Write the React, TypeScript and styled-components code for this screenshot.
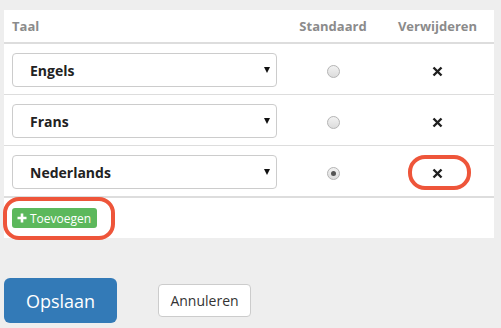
import * as React from "react";
import styled, { createGlobalStyle } from "styled-components";

const GlobalStyle = createGlobalStyle`
  body {
    margin: 0;
    background: #eeeeee;
    font-family: "Open Sans", "Liberation Sans", sans-serif;
  }
`;

const Page = styled.div`
  padding: 10px 7px 0 4px;
`;

const Panel = styled.div`
  position: relative;
  background: #ffffff;
  width: 490px;
`;

const Table = styled.table`
  width: 100%;
  border-collapse: collapse;
`;

const HeadCell = styled.th<{ $center?: boolean; $width?: number }>`
  height: 33px;
  padding: 0 8px;
  box-sizing: border-box;
  font-size: 13px;
  font-weight: 700;
  color: #8b8b8b;
  text-align: ${(p) => (p.$center ? "center" : "left")};
  width: ${(p) => (p.$width ? `${p.$width}px` : "auto")};
  border-bottom: 2px solid #dddddd;
`;

const Row = styled.tr<{ $last?: boolean }>`
  border-bottom: ${(p) => (p.$last ? "2px" : "1px")} solid #dddddd;
`;

const Cell = styled.td<{ $center?: boolean }>`
  padding: 9px 8px 7px;
  height: 34px;
  text-align: ${(p) => (p.$center ? "center" : "left")};
  vertical-align: middle;
`;

const SelectBox = styled.div`
  position: relative;
  height: 34px;
  box-sizing: border-box;
  border: 1px solid #cccccc;
  border-radius: 4px;
  display: flex;
  align-items: center;
  padding-left: 17px;
  font-size: 14px;
  font-weight: 700;
  color: #222222;
`;

const Caret = styled.span`
  position: absolute;
  right: 6px;
  top: 50%;
  transform: translateY(-50%);
  width: 0;
  height: 0;
  border-left: 3px solid transparent;
  border-right: 3px solid transparent;
  border-top: 6px solid #111111;
`;

const Radio = styled.span<{ $checked?: boolean }>`
  display: inline-block;
  position: relative;
  width: 11px;
  height: 11px;
  border-radius: 50%;
  border: 1px solid #b5b5b5;
  background: linear-gradient(#f2f2f2, #dcdcdc);
  vertical-align: middle;

  &::after {
    content: "";
    display: ${(p) => (p.$checked ? "block" : "none")};
    position: absolute;
    left: 3px;
    top: 3px;
    width: 5px;
    height: 5px;
    border-radius: 50%;
    background: #555555;
  }
`;

const RemoveIcon = styled.svg`
  display: inline-block;
  vertical-align: middle;
`;

const Footer = styled.div`
  padding: 8px 8px 10px;
`;

const AddButton = styled.button`
  display: inline-flex;
  align-items: center;
  gap: 3px;
  height: 20px;
  padding: 0 6px 0 5px;
  border: none;
  border-radius: 3px;
  background: #5cb85c;
  color: #ffffff;
  font-family: inherit;
  font-size: 12px;
`;

const Highlight = styled.div<{ $left: number; $top: number; $w: number; $h: number; $r: number }>`
  position: absolute;
  left: ${(p) => p.$left}px;
  top: ${(p) => p.$top}px;
  width: ${(p) => p.$w}px;
  height: ${(p) => p.$h}px;
  box-sizing: border-box;
  border: 4px solid #ee553a;
  border-radius: ${(p) => p.$r}px;
  pointer-events: none;
`;

const Actions = styled.div`
  display: flex;
  align-items: center;
  gap: 41px;
  margin-top: 40px;
`;

const PrimaryButton = styled.button`
  width: 113px;
  height: 45px;
  border: none;
  border-radius: 6px;
  background: #337ab7;
  color: #ffffff;
  font-family: inherit;
  font-size: 18px;
`;

const DefaultButton = styled.button`
  width: 93px;
  height: 33px;
  border: 1px solid #cccccc;
  border-radius: 4px;
  background: #ffffff;
  color: #333333;
  font-family: inherit;
  font-size: 14px;
`;

const languages = [
  { name: "Engels", standard: false },
  { name: "Frans", standard: false },
  { name: "Nederlands", standard: true },
];

const Cross = () => (
  <RemoveIcon width="11" height="11" viewBox="0 0 11 11">
    <path d="M1.5 1.5 L9.5 9.5 M9.5 1.5 L1.5 9.5" stroke="#1f1f1f" strokeWidth="2.4" />
  </RemoveIcon>
);

const Plus = () => (
  <svg width="10" height="10" viewBox="0 0 10 10">
    <path d="M5 0.5 V9.5 M0.5 5 H9.5" stroke="#ffffff" strokeWidth="2.6" />
  </svg>
);

export default function App() {
  return (
    <Page>
      <GlobalStyle />
      <Panel>
        <Table>
          <thead>
            <tr>
              <HeadCell>Taal</HeadCell>
              <HeadCell $center $width={96}>Standaard</HeadCell>
              <HeadCell $center $width={113}>Verwijderen</HeadCell>
            </tr>
          </thead>
          <tbody>
            {languages.map((lang, i) => (
              <Row key={lang.name} $last={i === languages.length - 1}>
                <Cell>
                  <SelectBox>
                    {lang.name}
                    <Caret />
                  </SelectBox>
                </Cell>
                <Cell $center>
                  <Radio $checked={lang.standard} />
                </Cell>
                <Cell $center>
                  <Cross />
                </Cell>
              </Row>
            ))}
          </tbody>
        </Table>
        <Footer>
          <AddButton>
            <Plus />
            Toevoegen
          </AddButton>
        </Footer>
        <Highlight $left={-1} $top={187} $w={112} $h={43} $r={16} />
        <Highlight $left={404} $top={145} $w={63} $h={35} $r={17} />
      </Panel>
      <Actions>
        <PrimaryButton>Opslaan</PrimaryButton>
        <DefaultButton>Annuleren</DefaultButton>
      </Actions>
    </Page>
  );
}
